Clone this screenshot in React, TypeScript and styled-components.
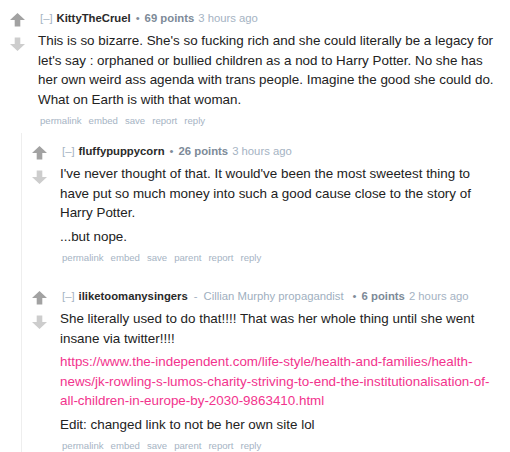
import styled, { createGlobalStyle } from "styled-components";

const GlobalStyle = createGlobalStyle`
  body {
    margin: 0;
    background: #ffffff;
    font-family: "Liberation Sans", Arial, sans-serif;
  }
`;

type Data = {
  author: string;
  flair?: string;
  points: number;
  time: string;
  body: React.ReactNode[];
  actions: string[];
};

function Arrow({ down }: { down?: boolean }) {
  return (
    <svg width="15" height="14" viewBox="0 0 15 14">
      <polygon
        points="7.5,0 15,7 10.3,7 10.3,13.5 4.7,13.5 4.7,7 0,7"
        fill={down ? "#cdcdcd" : "#a2a2a2"}
        transform={down ? "rotate(180 7.5 7)" : undefined}
      />
    </svg>
  );
}

function Comment({ data, children }: { data: Data; children?: React.ReactNode }) {
  return (
    <Thing>
      <Row>
        <MidCol>
          <Arrow />
          <Arrow down />
        </MidCol>
        <Entry>
          <Tagline>
            <Expand>[–]</Expand>
            <Author>{data.author}</Author>
            {data.flair && (
              <>
                <Dash>-</Dash>
                <Flair>{data.flair}</Flair>
              </>
            )}
            <Bullet>•</Bullet>
            <Score>{data.points} points</Score>
            <Time>{data.time}</Time>
          </Tagline>
          <Body>
            {data.body.map((p, i) => (
              <P key={i}>{p}</P>
            ))}
          </Body>
          <FlatList>
            {data.actions.map((a) => (
              <Action key={a}>{a}</Action>
            ))}
          </FlatList>
        </Entry>
      </Row>
      {children && <Child>{children}</Child>}
    </Thing>
  );
}

const url =
  "https://www.the-independent.com/life-style/health-and-families/health-news/jk-rowling-s-lumos-charity-striving-to-end-the-institutionalisation-of-all-children-in-europe-by-2030-9863410.html";

function buildComments(): Data[] {
  return [
    {
      author: "KittyTheCruel",
      points: 69,
      time: "3 hours ago",
      body: [
        "This is so bizarre. She's so fucking rich and she could literally be a legacy for let's say : orphaned or bullied children as a nod to Harry Potter. No she has her own weird ass agenda with trans people. Imagine the good she could do. What on Earth is with that woman.",
      ],
      actions: ["permalink", "embed", "save", "report", "reply"],
    },
    {
      author: "fluffypuppycorn",
      points: 26,
      time: "3 hours ago",
      body: [
        "I've never thought of that. It would've been the most sweetest thing to have put so much money into such a good cause close to the story of Harry Potter.",
        "...but nope.",
      ],
      actions: ["permalink", "embed", "save", "parent", "report", "reply"],
    },
    {
      author: "iliketoomanysingers",
      flair: "Cillian Murphy propagandist",
      points: 6,
      time: "2 hours ago",
      body: [
        "She literally used to do that!!!! That was her whole thing until she went insane via twitter!!!!",
        <Link href="#">{url}</Link>,
        "Edit: changed link to not be her own site lol",
      ],
      actions: ["permalink", "embed", "save", "parent", "report", "reply"],
    },
  ];
}

export default function App() {
  const [first, second, third] = buildComments();
  return (
    <>
      <GlobalStyle />
      <Page>
        <Comment data={first}>
          <Comment data={second} />
          <Comment data={third} />
        </Comment>
      </Page>
    </>
  );
}

const Page = styled.div`
  width: 510px;
  padding-top: 10px;
  box-sizing: border-box;
`;

const Thing = styled.div`
  display: flex;
  flex-direction: column;
`;

const Row = styled.div`
  display: flex;
  padding-left: 10px;
  padding-right: 14px;
`;

const MidCol = styled.div`
  width: 15px;
  display: flex;
  flex-direction: column;
  gap: 10px;
  padding-top: 3px;
  flex-shrink: 0;
`;

const Entry = styled.div`
  margin-left: 13px;
  flex: 1;
  min-width: 0;
`;

const Tagline = styled.div`
  font-size: 11.3px;
  line-height: 16px;
  color: #a0afc0;
  white-space: nowrap;
  padding-left: 2px;
`;

const Expand = styled.span`
  color: #a5b3c3;
  margin-right: 4px;
`;

const Author = styled.span`
  color: #2a2a2a;
  font-weight: bold;
`;

const Dash = styled.span`
  margin: 0 6px;
  color: #a5b3c3;
`;

const Flair = styled.span`
  color: #a0afc0;
  margin-right: 4px;
`;

const Bullet = styled.span`
  margin: 0 5px;
  color: #7f8b98;
`;

const Score = styled.span`
  font-weight: bold;
  color: #7d8a98;
  margin-right: 4px;
`;

const Time = styled.span`
  color: #a5b3c3;
`;

const Body = styled.div`
  margin-top: 5px;
  font-size: 13.4px;
  line-height: 19.5px;
  color: #222222;
`;

const P = styled.p`
  margin: 0 0 4px;
`;

const Link = styled.a`
  color: #f2338d;
  text-decoration: none;
`;

const FlatList = styled.div`
  display: flex;
  gap: 7px;
  padding-left: 2px;
  margin-top: 5px;
  font-size: 9.6px;
  line-height: 14px;
  color: #a6b4c4;
`;

const Action = styled.span``;

const Child = styled.div`
  margin-left: 21px;
  margin-top: 5px;
  border-left: 1px solid #eeeeee;
  display: flex;
  flex-direction: column;
  gap: 23px;
  padding-top: 10px;
  padding-bottom: 8px;
`;
